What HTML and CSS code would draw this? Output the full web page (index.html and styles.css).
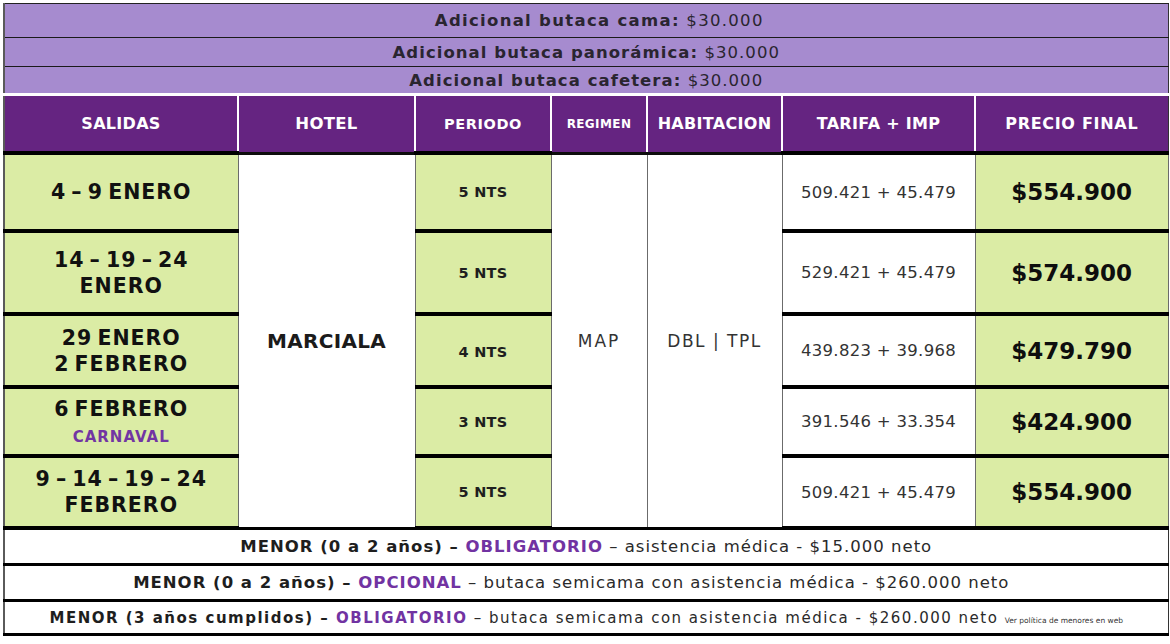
FILE: index.html
```html
<!DOCTYPE html>
<html lang="es">
<head>
<meta charset="utf-8">
<title>Tarifas Marciala</title>
<link rel="stylesheet" href="styles.css">
</head>
<body>
<div class="wrap">
<table class="tarifas">
  <colgroup>
    <col class="c-salidas"><col class="c-hotel"><col class="c-periodo"><col class="c-regimen"><col class="c-hab"><col class="c-tarifa"><col class="c-precio">
  </colgroup>
  <tbody>
    <tr class="info info-1"><td colspan="7"><b>Adicional butaca cama:</b> $30.000</td></tr>
    <tr class="info info-2"><td colspan="7"><b>Adicional butaca panorámica:</b> $30.000</td></tr>
    <tr class="info info-3"><td colspan="7"><b>Adicional butaca cafetera:</b> $30.000</td></tr>
    <tr class="head">
      <th class="h-salidas">SALIDAS</th>
      <th class="h-hotel">HOTEL</th>
      <th class="h-periodo">PERIODO</th>
      <th class="h-regimen">REGIMEN</th>
      <th class="h-hab">HABITACION</th>
      <th class="h-tarifa">TARIFA + IMP</th>
      <th class="h-precio">PRECIO FINAL</th>
    </tr>
    <tr class="data r1">
      <td class="salida">4 – 9 ENERO</td>
      <td class="span hotel" rowspan="5">MARCIALA</td>
      <td class="nts">5 NTS</td>
      <td class="span reg" rowspan="5">MAP</td>
      <td class="span hab" rowspan="5">DBL | TPL</td>
      <td class="tarifa">509.421 + 45.479</td>
      <td class="precio">$554.900</td>
    </tr>
    <tr class="data r2">
      <td class="salida">14 – 19 – 24<br>ENERO</td>
      <td class="nts">5 NTS</td>
      <td class="tarifa">529.421 + 45.479</td>
      <td class="precio">$574.900</td>
    </tr>
    <tr class="data r3">
      <td class="salida">29 ENERO<br>2 FEBRERO</td>
      <td class="nts nts-low">4 NTS</td>
      <td class="tarifa">439.823 + 39.968</td>
      <td class="precio">$479.790</td>
    </tr>
    <tr class="data r4">
      <td class="salida">6 FEBRERO<br><span class="carnaval">CARNAVAL</span></td>
      <td class="nts">3 NTS</td>
      <td class="tarifa">391.546 + 33.354</td>
      <td class="precio">$424.900</td>
    </tr>
    <tr class="data r5">
      <td class="salida">9 – 14 – 19 – 24<br>FEBRERO</td>
      <td class="nts">5 NTS</td>
      <td class="tarifa">509.421 + 45.479</td>
      <td class="precio">$554.900</td>
    </tr>
    <tr class="foot f1"><td colspan="7"><b>MENOR (0 a 2 años) – <span class="violet">OBLIGATORIO</span></b> – asistencia médica - $15.000 neto</td></tr>
    <tr class="foot f2"><td colspan="7"><b>MENOR (0 a 2 años) – <span class="violet">OPCIONAL</span></b> – butaca semicama con asistencia médica - $260.000 neto</td></tr>
    <tr class="foot f3"><td colspan="7"><b>MENOR (3 años cumplidos) – <span class="violet">OBLIGATORIO</span></b> – butaca semicama con asistencia médica - $260.000 neto <small class="tiny">Ver política de menores en web</small></td></tr>
  </tbody>
</table>
</div>
</body>
</html>
```

FILE: styles.css
```css
html, body {
  margin: 0;
  padding: 0;
  background: #ffffff;
}

.wrap {
  padding: 3px 3px 0 3px;
}

.tarifas {
  width: 1164px;
  border-collapse: collapse;
  table-layout: fixed;
  font-family: "DejaVu Sans", sans-serif;
  color: #1b1b1b;
  border-left: 2px solid #5a5a5a;
  border-right: 1px solid #333;
}

.c-salidas { width: 234px; }
.c-hotel { width: 177px; }
.c-periodo { width: 136px; }
.c-regimen { width: 96px; }
.c-hab { width: 135px; }
.c-tarifa { width: 193px; }
.c-precio { width: 193px; }

td, th {
  padding: 0;
  text-align: center;
  vertical-align: middle;
}

/* top info rows */
.info td {
  background: #a68bcf;
  font-size: 16.5px;
  letter-spacing: 1.05px;
  border-top: 1px solid #1a1a1a;
  color: #2a2530;
  font-weight: normal;
}
.info b { font-weight: bold; }
.info-1 td { height: 33px; border-top: 1px solid #222; padding-left: 26px; letter-spacing: 1.3px; }
.info-2 td { height: 28px; }
.info-3 td { height: 25px; padding-top: 1px; }

/* header */
.head th {
  background: #652481;
  color: #ffffff;
  font-weight: bold;
  height: 55px;
  border-top: 3px solid #ffffff;
  border-left: 2px solid #ffffff;
  border-right: 2px solid #ffffff;
  border-bottom: 3px solid #0d0d0d;
  font-size: 16px;
  letter-spacing: 0.3px;
}
.head th.h-salidas { border-left: none; }
.head th.h-precio { border-right: none; letter-spacing: 0.7px; }
.head .h-periodo { font-size: 14.5px; letter-spacing: 0.6px; }
.head .h-regimen { font-size: 12px; letter-spacing: 0.4px; }
.head .h-hab { font-size: 16px; }
.head .h-hotel { font-size: 16.5px; }

/* data */
.data td {
  border-left: 1px solid #6b6b6b;
  border-right: 1px solid #6b6b6b;
}
.salida, .nts, .precio {
  background: #dbeca5;
}
.salida, .nts, .tarifa, .precio {
  border-bottom: 4px solid #000;
  border-top: 4px solid #000;
}
.salida {
  font-weight: bold;
  font-size: 20.5px;
  letter-spacing: 1px;
  word-spacing: -3px;
  line-height: 26px;
  color: #111;
}
.carnaval {
  color: #7235a3;
  font-size: 15px;
  letter-spacing: 1px;
  word-spacing: 0;
  line-height: 20px;
}
.nts {
  font-weight: bold;
  font-size: 14.5px;
  letter-spacing: 0.3px;
  color: #1e1e1e;
}
.nts-low { padding-top: 2px; }
.tarifa {
  font-size: 16.5px;
  letter-spacing: 0.3px;
  color: #333;
  background: #fff;
}
.precio {
  font-weight: bold;
  font-size: 23px;
  color: #0e0e0e;
}
.span {
  background: #fff;
  border-top: 2px solid #000;
}
.hotel {
  font-weight: bold;
  font-size: 20px;
  letter-spacing: 0.3px;
  color: #1b1b1b;
}
.reg, .hab {
  font-size: 17px;
  color: #333;
}
.reg { letter-spacing: 2px; }
.hab { letter-spacing: 1.5px; }
.r1 td { height: 74px; }
.r2 td { height: 79px; }
.r3 td { height: 67px; }
.r4 td { height: 65px; }
.r5 td { height: 68px; }

/* footer rows */
.foot td {
  background: #fff;
  border-top: 3px solid #000;
  border-bottom: 3px solid #000;
  font-size: 16.5px;
  letter-spacing: 1px;
  color: #2a2a2a;
}
.foot b { color: #1e1e1e; }
.f1 td { height: 33px; }
.f2 td { height: 33px; padding-right: 30px; }
.f3 td { height: 31px; font-size: 15px; letter-spacing: 1.5px; }
.violet { color: #7133a2; }
.tiny {
  font-size: 7.5px;
  letter-spacing: 0;
  color: #333;
}
```
